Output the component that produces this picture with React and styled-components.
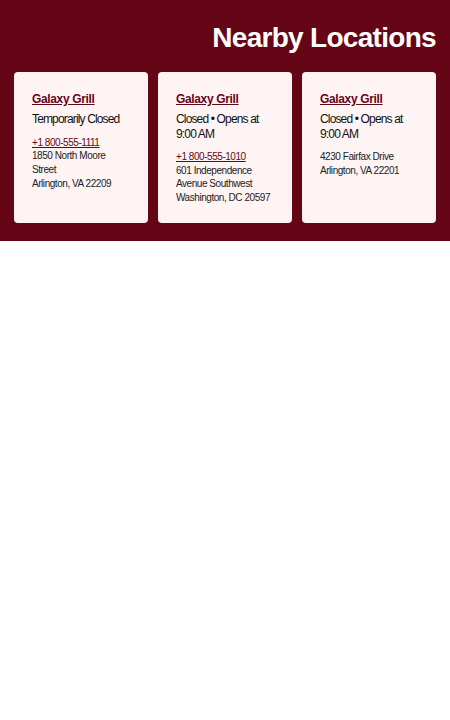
import styled, { createGlobalStyle } from "styled-components";

const GlobalStyle = createGlobalStyle`
  body {
    margin: 0;
    background: #fff;
    font-family: "Liberation Sans", Arial, sans-serif;
  }
`;

const Section = styled.section`
  background: #650616;
  padding: 21px 14px 18px;
`;

const Heading = styled.h2`
  margin: 0 0 17px;
  text-align: right;
  color: #fff;
  font-size: 28px;
  font-weight: 700;
  line-height: 34px;
  letter-spacing: -0.7px;
`;

const Grid = styled.div`
  display: grid;
  grid-template-columns: repeat(3, 1fr);
  gap: 10px;
`;

const Card = styled.div`
  background: #fff4f4;
  border-radius: 4px;
  padding: 18px;
  min-width: 0;
`;

const Name = styled.a`
  display: block;
  color: #650616;
  font-size: 12px;
  font-weight: 700;
  line-height: 18px;
  letter-spacing: -0.35px;
  text-decoration: underline;
`;

const Status = styled.p`
  margin: 4px 0 9px;
  color: #111;
  font-size: 12px;
  line-height: 14.5px;
  letter-spacing: -0.85px;
`;

const Phone = styled.a`
  display: block;
  color: #650616;
  font-size: 10px;
  line-height: 13.7px;
  letter-spacing: -0.45px;
  text-decoration: underline;
`;

const Address = styled.p`
  margin: 0;
  color: #222;
  font-size: 10px;
  line-height: 13.7px;
  letter-spacing: -0.45px;
`;

const locations = [
  {
    status: "Temporarily Closed",
    phone: "+1 800-555-1111",
    lines: ["1850 North Moore Street", "Arlington, VA 22209"],
  },
  {
    status: "Closed • Opens at 9:00 AM",
    phone: "+1 800-555-1010",
    lines: ["601 Independence Avenue Southwest", "Washington, DC 20597"],
  },
  {
    status: "Closed • Opens at 9:00 AM",
    lines: ["4230 Fairfax Drive", "Arlington, VA 22201"],
  },
];

const App = () => {
  return (
    <>
      <GlobalStyle />
      <Section>
        <Heading>Nearby Locations</Heading>
        <Grid>
          {locations.map((loc, i) => (
            <Card key={i}>
              <Name href="#">Galaxy Grill</Name>
              <Status>{loc.status}</Status>
              {loc.phone && <Phone href="#">{loc.phone}</Phone>}
              {loc.lines.map((l) => (
                <Address key={l}>{l}</Address>
              ))}
            </Card>
          ))}
        </Grid>
      </Section>
    </>
  );
};

export default App;
